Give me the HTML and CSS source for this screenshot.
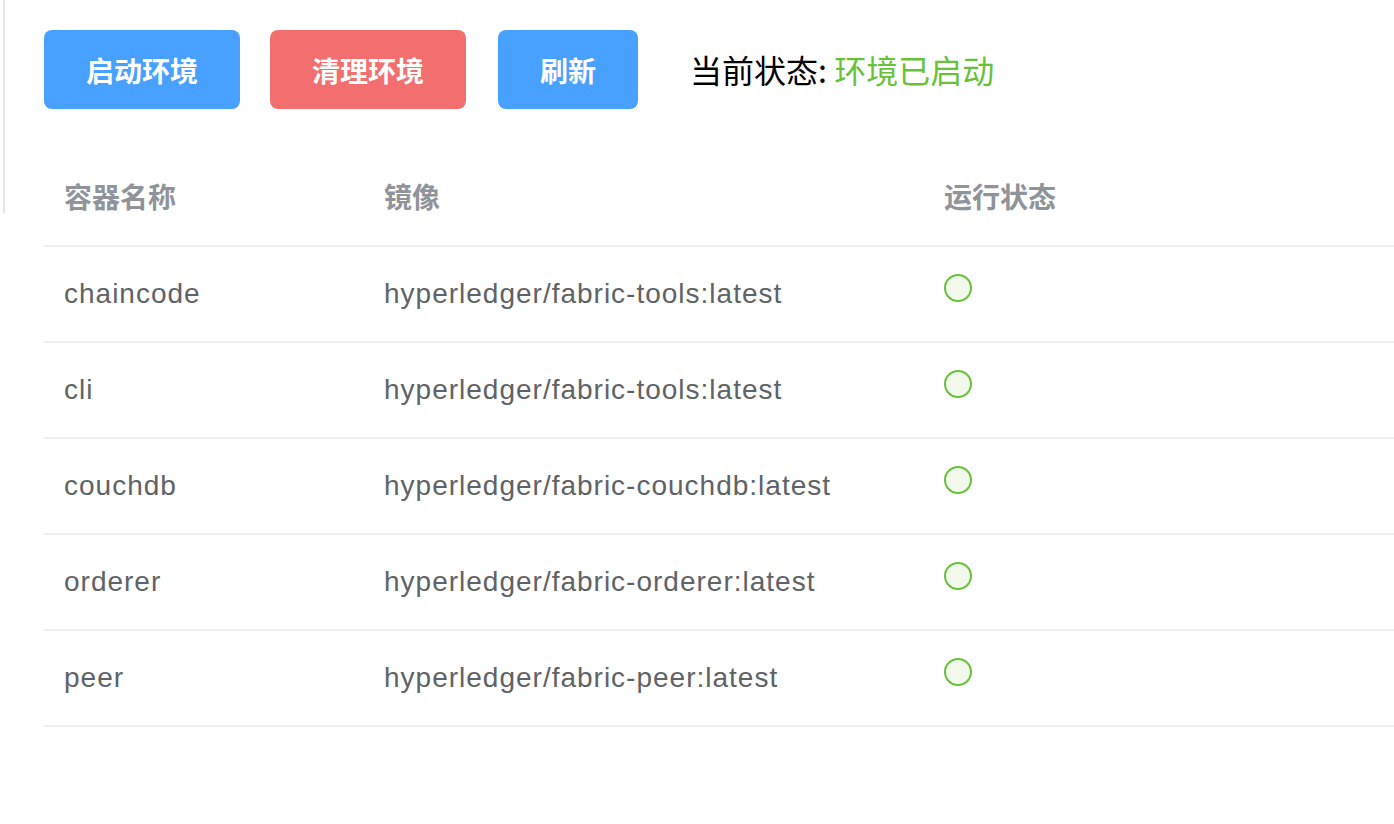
FILE: index.html
```html
<!DOCTYPE html>
<html lang="zh">
<head>
<meta charset="utf-8">
<title>环境管理</title>
<link rel="stylesheet" href="styles.css">
</head>
<body>
<div class="side-line"></div>
<main class="page">
  <div class="toolbar">
    <button class="btn btn-primary">启动环境</button>
    <button class="btn btn-danger">清理环境</button>
    <button class="btn btn-primary btn-refresh">刷新</button>
    <div class="status">当前状态: <span class="status-ok">环境已启动</span></div>
  </div>
  <table class="table">
    <thead>
      <tr><th class="c1">容器名称</th><th class="c2">镜像</th><th class="c3">运行状态</th></tr>
    </thead>
    <tbody>
      <tr><td>chaincode</td><td>hyperledger/fabric-tools:latest</td><td><span class="dot"></span></td></tr>
      <tr><td>cli</td><td>hyperledger/fabric-tools:latest</td><td><span class="dot"></span></td></tr>
      <tr><td>couchdb</td><td>hyperledger/fabric-couchdb:latest</td><td><span class="dot"></span></td></tr>
      <tr><td>orderer</td><td>hyperledger/fabric-orderer:latest</td><td><span class="dot"></span></td></tr>
      <tr><td>peer</td><td>hyperledger/fabric-peer:latest</td><td><span class="dot"></span></td></tr>
    </tbody>
  </table>
</main>
</body>
</html>
```
FILE: styles.css
```css
html, body {
  margin: 0;
  padding: 0;
  background: #fff;
  overflow: hidden;
}
body {
  font-family: "Liberation Sans", "Noto Sans CJK SC", sans-serif;
  position: relative;
  width: 1394px;
  height: 824px;
}
.side-line {
  position: absolute;
  left: 3px;
  top: 0;
  width: 2px;
  height: 213px;
  background: #e6e6e6;
}
.page {
  padding: 30px 0 0 44px;
}
.toolbar {
  display: flex;
  align-items: center;
  height: 79px;
}
.btn {
  height: 79px;
  padding: 0 42px;
  border: none;
  border-radius: 8px;
  color: #fff;
  font-family: "Noto Sans CJK SC", sans-serif;
  font-weight: 700;
  font-size: 28px;
  line-height: 1;
  margin: 0;
}
.btn-primary { background: #48a1ff; }
.btn-danger { background: #f36e6e; margin-left: 30px; }
.btn-refresh { margin-left: 32px; }
.status {
  margin-left: 52px;
  font-family: "Noto Sans CJK SC", sans-serif;
  font-size: 32px;
  color: #000;
  padding-bottom: 2px;
}
.status-ok { color: #67c23a; }
.table {
  margin-top: 40px;
  border-collapse: collapse;
  width: 1400px;
  table-layout: fixed;
}
.table th, .table td {
  text-align: left;
  padding: 24px 20px;
  line-height: 46px;
  border-bottom: 2px solid #ebeef5;
  vertical-align: top;
}
.table th {
  padding-bottom: 26px;
}
.c1 { width: 280px; }
.c2 { width: 520px; }
.table th {
  font-family: "Noto Sans CJK SC", sans-serif;
  font-weight: 700;
  font-size: 28px;
  color: #909399;
}
.table td {
  font-size: 28px;
  color: #606266;
  letter-spacing: 1px;
}
.dot {
  display: block;
  width: 24px;
  height: 24px;
  margin-top: 3px;
  border: 2px solid #67c23a;
  border-radius: 50%;
  background: #f0f9eb;
}
```
